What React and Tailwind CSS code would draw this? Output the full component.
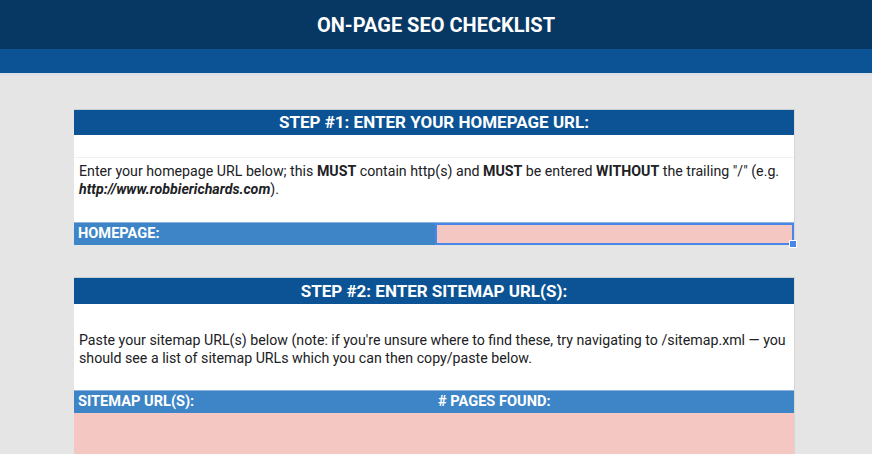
import React from 'react';

const font = { fontFamily: 'Roboto, "Liberation Sans", sans-serif' };

const StepHeader = ({ children, className = '' }) => (
  <div className={`bg-[#0b5394] text-white font-bold text-[17px] leading-none flex items-center justify-center ${className}`}>
    {children}
  </div>
);

export default function App() {
  return (
    <div className="w-[872px] h-[454px] overflow-hidden bg-[#e5e5e5] text-[#202124]" style={font}>
      {/* Top banner */}
      <header className="h-[49px] bg-[#073763] flex items-center justify-center pt-[1px]">
        <h1 className="text-white font-bold text-[20px]">ON-PAGE SEO CHECKLIST</h1>
      </header>
      <div className="h-[24px] bg-[#0b5394]" />
      <div className="h-[3px] bg-[#dbe0e7]" />

      <main className="pl-[74px] pt-[33px]">
        {/* Step 1 */}
        <section className="w-[721px] border-t border-[#c8ced6] border-r border-r-[#d6d6d6]">
          <StepHeader className="h-[25px]">STEP #1: ENTER YOUR HOMEPAGE URL:</StepHeader>
          <div className="bg-white">
            <div className="h-[23px] border-b border-[#f1f1f1]" />
            <p className="h-[64px] px-[5px] pt-[4px] text-[14.2px] leading-[18px] whitespace-nowrap">
              Enter your homepage URL below; this <b>MUST</b> contain http(s) and <b>MUST</b> be entered{' '}
              <b>WITHOUT</b> the trailing "/" (e.g.
              <br />
              <b><i>http://www.robbierichards.com</i></b>).
            </p>
          </div>
          <div className="flex h-[23px] border-t border-[#8fb4db]">
            <div className="w-[361px] bg-[#3d85c6] text-white font-bold text-[14.6px] flex items-center px-[4px]">
              HOMEPAGE:
            </div>
            <div className="relative flex-1 bg-[#f4c7c3] border-2 border-[#4a86e8]">
              <span className="absolute -right-[5px] -bottom-[5px] w-[8px] h-[8px] bg-[#4a86e8] border border-white" />
            </div>
          </div>
        </section>

        {/* Step 2 */}
        <section className="w-[721px] mt-[32px] border-t border-[#c8ced6] border-r border-r-[#d6d6d6]">
          <StepHeader className="h-[26px]">STEP #2: ENTER SITEMAP URL(S):</StepHeader>
          <div className="bg-white h-[86px] px-[5px] pt-[27px] overflow-hidden">
            <p className="text-[14.2px] leading-[18px] whitespace-nowrap">
              Paste your sitemap URL(s) below (note: if you're unsure where to find these, try navigating to /sitemap.xml — you
              <br />
              should see a list of sitemap URLs which you can then copy/paste below.
            </p>
          </div>
          <div className="flex h-[23px] bg-[#3d85c6] border-t border-[#8fb4db] text-white font-bold text-[14.6px]">
            <div className="w-[361px] flex items-center px-[4px]">SITEMAP URL(S):</div>
            <div className="flex-1 flex items-center px-[3px]"># PAGES FOUND:</div>
          </div>
          <div className="h-[60px] bg-[#f4c7c3]" />
        </section>
      </main>
    </div>
  );
}
